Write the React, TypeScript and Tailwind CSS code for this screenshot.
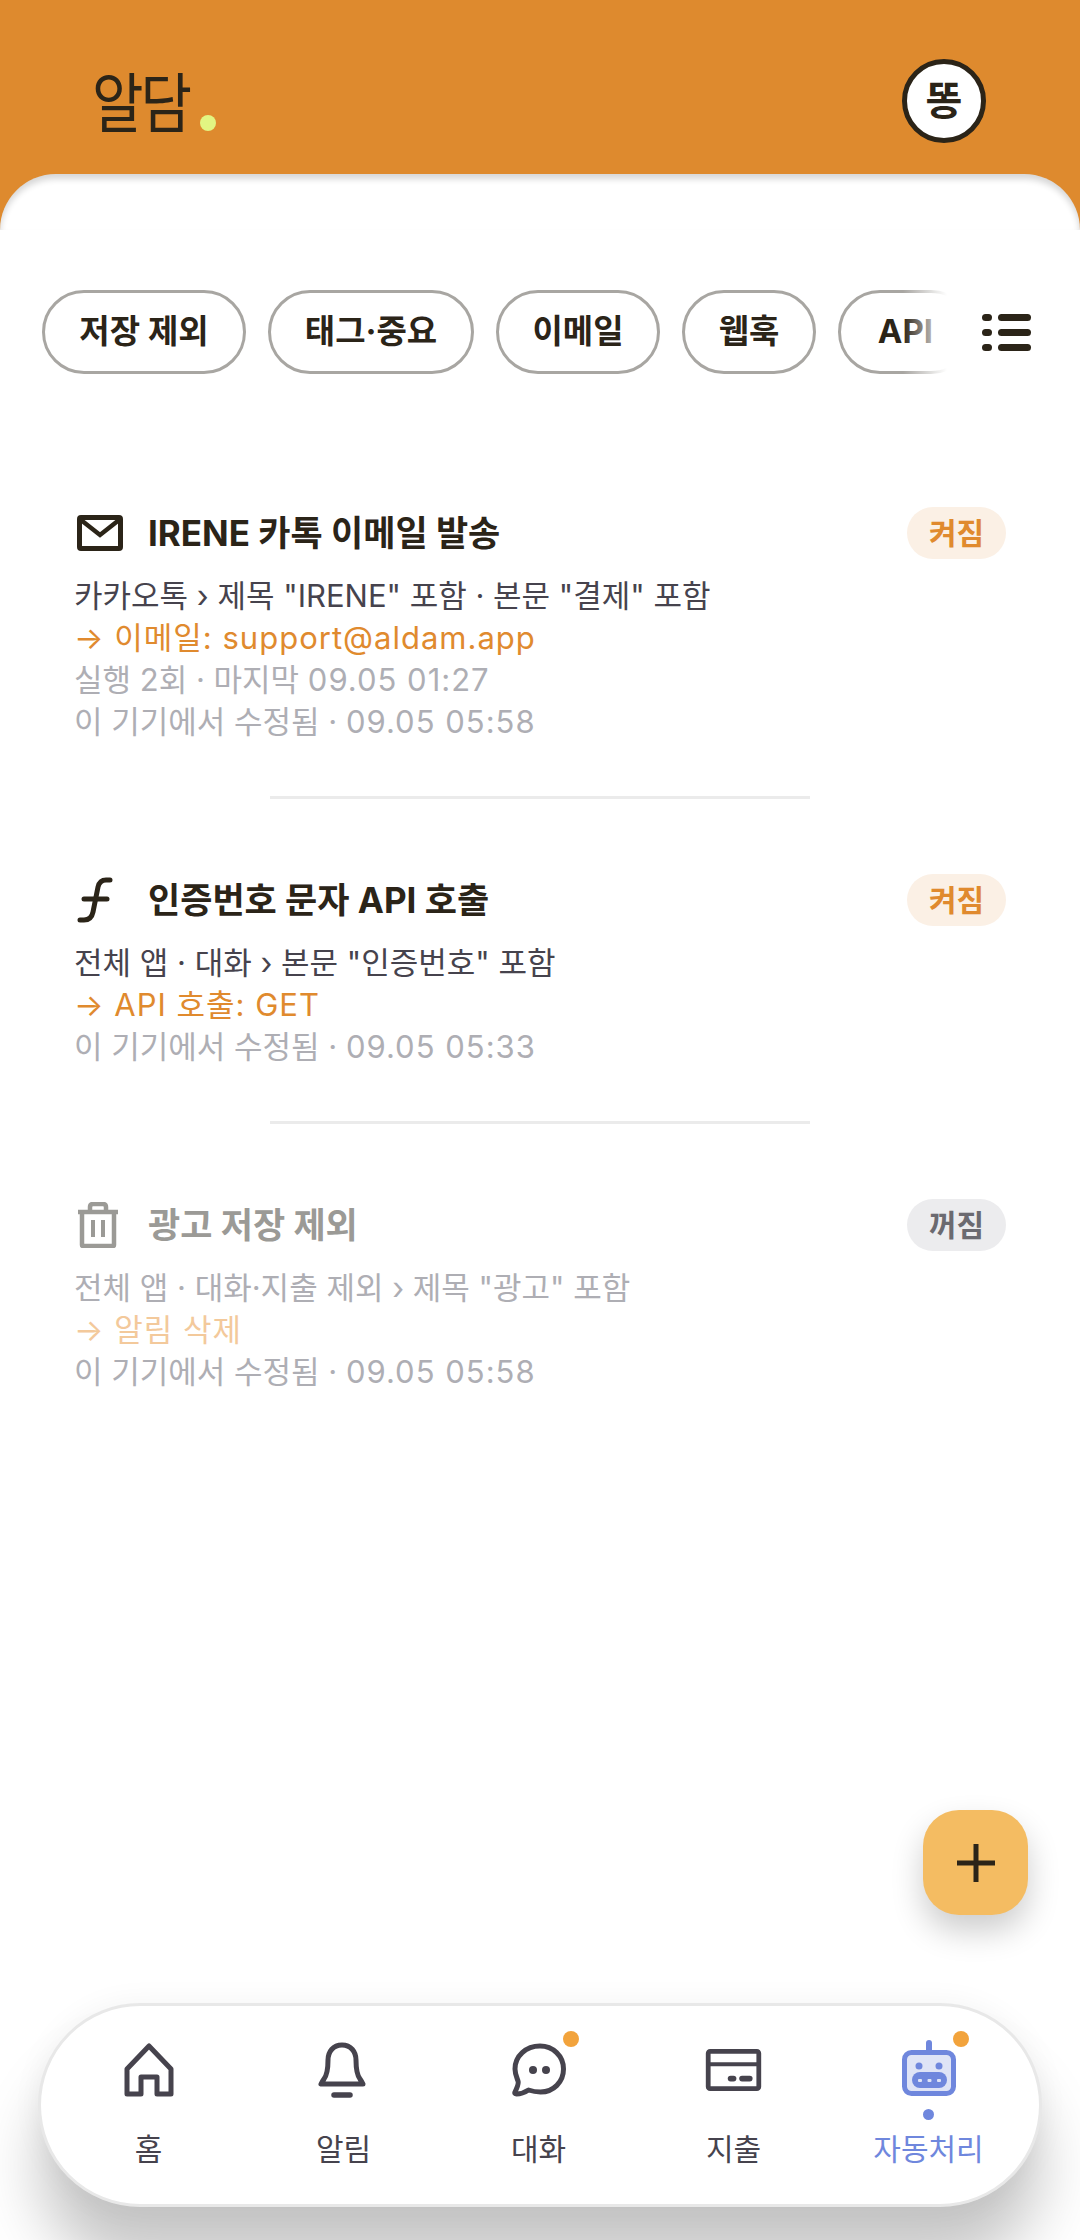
import React from 'react';

const FONT = '[font-family:Inter,"Noto_Sans_CJK_KR",sans-serif]';

function MailIcon() {
  return (
    <svg width="46" height="36" viewBox="0 0 46 36" fill="none">
      <rect x="2.5" y="2.5" width="41" height="31" rx="1.5" stroke="#2b2418" strokeWidth="5" />
      <path d="M4 5l19 15L42 5" stroke="#2b2418" strokeWidth="4.5" />
    </svg>
  );
}

function FnIcon() {
  return (
    <svg width="36" height="46" viewBox="0 0 36 46" fill="none" stroke="#2b2418" strokeWidth="5" strokeLinecap="round">
      <path d="M33 3h-4c-5 0-7 3-8 7l-5 25c-1 5-4 8-9 8H3" />
      <path d="M7 22h23" />
    </svg>
  );
}

function TrashIcon() {
  return (
    <svg width="42" height="46" viewBox="0 0 42 46" fill="none" stroke="#9b9a96" strokeWidth="4.5">
      <path d="M1 10h40" />
      <path d="M13 10V5c0-2 1-3 3-3h10c2 0 3 1 3 3v5" />
      <path d="M5 10v33c0 .8.6 1 1 1h30c.4 0 1-.2 1-1V10" />
      <path d="M16 18v17M26 18v17" strokeWidth="4" />
    </svg>
  );
}

function HomeIcon() {
  return (
    <svg width="50" height="54" viewBox="0 0 50 54" fill="none" stroke="#46434d" strokeWidth="5" strokeLinejoin="round">
      <path d="M25 3L3 26v25h14V34h16v17h14V26z" />
    </svg>
  );
}

function BellIcon() {
  return (
    <svg width="50" height="56" viewBox="0 0 50 56" fill="none" stroke="#46434d" strokeWidth="5" strokeLinecap="round" strokeLinejoin="round" className="-translate-x-[2px]">
      <path d="M25 3c-9 0-14 7-14 15 0 9-1 15-4 19-2 3-3 5-3 5h42s-1-2-3-5c-3-4-4-10-4-19 0-8-5-15-14-15z" />
      <path d="M17 53h16" strokeWidth="5.5" />
    </svg>
  );
}

function ChatIcon() {
  return (
    <svg width="54" height="54" viewBox="0 0 54 54" fill="none">
      <path
        d="M28 3C14 3 3 13 3 26c0 5 2 9 3 12 .7 2-1 7-3 11-.6 1.400 0 2 1.500 2 3 0 9-2 12-4 3 1 7 2 12 2 13 0 23-10 23-23S41 3 28 3z"
        stroke="#46434d"
        strokeWidth="5"
        strokeLinejoin="round"
      />
      <circle cx="21" cy="27" r="4" fill="#46434d" />
      <circle cx="34" cy="27" r="4" fill="#46434d" />
    </svg>
  );
}

function CardIcon() {
  return (
    <svg width="57" height="42" viewBox="0 0 58 44" fill="none">
      <rect x="2.500" y="2.500" width="53" height="39" rx="2" stroke="#46434d" strokeWidth="5" />
      <path d="M3 16h52" stroke="#46434d" strokeWidth="4" />
      <rect x="23" y="28" width="9" height="6" rx="3" fill="#46434d" />
      <rect x="35" y="28" width="14" height="6" rx="3" fill="#46434d" />
    </svg>
  );
}

function RobotIcon() {
  return (
    <svg width="54" height="56" viewBox="0 0 54 56" fill="none" className="-translate-y-[2px]">
      <rect x="24" y="0" width="6" height="14" rx="3" fill="#6f87dd" />
      <rect x="2.500" y="12.500" width="49" height="41" rx="7" fill="#dfe4f6" stroke="#6f87dd" strokeWidth="5" />
      <circle cx="17" cy="26" r="3.500" fill="#6f87dd" />
      <circle cx="37" cy="26" r="3.500" fill="#6f87dd" />
      <rect x="10" y="32" width="35" height="16" rx="8" fill="#6f87dd" />
      <rect x="16" y="39" width="4" height="3" rx="1" fill="#dfe4f6" />
      <rect x="25.500" y="39" width="4" height="3" rx="1" fill="#dfe4f6" />
      <rect x="35" y="39" width="4" height="3" rx="1" fill="#dfe4f6" />
    </svg>
  );
}

const chips = [
  { label: '저장 제외', cls: 'w-[204px]' },
  { label: '태그·중요', cls: 'w-[206px]' },
  { label: '이메일', cls: 'w-[164px]' },
  { label: '웹훅', cls: 'w-[134px]' },
  { label: 'API', cls: 'w-[135px]' },
];

const rules = [
  {
    icon: <MailIcon />,
    title: 'IRENE 카톡 이메일 발송',
    cond: '카카오톡 › 제목 "IRENE" 포함 · 본문 "결제" 포함',
    action: '→ 이메일: support@aldam.app',
    meta: [
      ['실행 2회 · 마지막 ', '09.05 01:27'],
      ['이 기기에서 수정됨 · ', '09.05 05:58'],
    ],
    on: true,
  },
  {
    icon: <FnIcon />,
    title: '인증번호 문자 API 호출',
    cond: '전체 앱 · 대화 › 본문 "인증번호" 포함',
    action: '→ API 호출: GET',
    meta: [['이 기기에서 수정됨 · ', '09.05 05:33']],
    on: true,
  },
  {
    icon: <TrashIcon />,
    title: '광고 저장 제외',
    cond: '전체 앱 · 대화·지출 제외 › 제목 "광고" 포함',
    action: '→ 알림 삭제',
    meta: [['이 기기에서 수정됨 · ', '09.05 05:58']],
    on: false,
  },
];

const tabs = [
  { icon: <HomeIcon />, label: '홈' },
  { icon: <BellIcon />, label: '알림' },
  { icon: <ChatIcon />, label: '대화', badge: true },
  { icon: <CardIcon />, label: '지출' },
  { icon: <RobotIcon />, label: '자동처리', badge: true, active: true },
];

function RuleRow({ rule }: { rule: (typeof rules)[number] }) {
  return (
    <div className="pl-[74px] pr-[74px]">
      <div className="flex h-[50px] items-center justify-between">
        <div className="flex items-center">
          <div className="flex w-[74px] shrink-0 justify-start pl-[3px]">{rule.icon}</div>
          <span className={`text-[35px] font-bold ${rule.on ? 'text-[#2b2418]' : 'text-[#9b9a96]'}`}>{rule.title}</span>
        </div>
        <span
          className={`flex h-[52px] w-[99px] items-center justify-center rounded-full text-[30px] font-bold ${
            rule.on ? 'bg-[#fbf0e5] text-[#e08a2e]' : 'bg-[#ececee] text-[#6b6a70]'
          }`}
        >
          {rule.on ? '켜짐' : '꺼짐'}
        </span>
      </div>
      <div className="mt-[17px] text-[31px] leading-[42px]">
        <p className={rule.on ? 'text-[#46434d]' : 'text-[#aeaeb4]'}>{rule.cond}</p>
        <p className={`tracking-[1px] ${rule.on ? 'text-[#e08a2e]' : 'text-[#f3c99b]'}`}>{rule.action}</p>
        {rule.meta.map(([label, time]) => (
          <p key={label + time} className="text-[#aeaeb4]">
            {label}
            <span className="tracking-[1px]">{time}</span>
          </p>
        ))}
      </div>
    </div>
  );
}

export default function App() {
  return (
    <div className={`relative h-[2240px] w-[1080px] overflow-hidden bg-[#de8a2e] ${FONT}`}>
      <header className="flex h-[174px] items-center justify-between pl-[92px] pr-[94px] pt-[28px]">
        <div className="flex items-end">
          <span className="origin-bottom translate-y-[8px] scale-y-[1.15] text-[56px] leading-[62px] tracking-[-3px] text-[#2b2418]">
            알담
          </span>
          <span className="mb-[1px] ml-[11px] h-[16px] w-[16px] rounded-full bg-[#e2f582]" />
        </div>
        <div className="flex h-[84px] w-[84px] items-center justify-center rounded-full border-[5px] border-[#2b2418] bg-white text-[40px] font-bold text-[#2b2418]">
          똥
        </div>
      </header>

      <main className="relative h-[2066px] rounded-t-[56px] bg-white pt-[116px]">
        <div className="absolute inset-x-0 top-0 h-[56px] rounded-t-[56px] shadow-[inset_0_5px_6px_rgba(0,0,0,0.16)]" />
        <div className="flex h-[84px] items-center pl-[42px] pr-[48px]">
          <div className="relative w-[905px] shrink-0 overflow-hidden">
            <div className="flex gap-[22px]">
              {chips.map((chip) => (
                <div
                  key={chip.label}
                  className={`flex h-[84px] shrink-0 items-center justify-center rounded-[42px] border-[3px] border-[#a8a6a2] text-[33px] font-bold text-[#2b2418] ${chip.cls}`}
                >
                  {chip.label}
                </div>
              ))}
            </div>
            <div className="absolute inset-y-0 right-0 w-[44px] bg-gradient-to-r from-transparent to-white" />
          </div>
          <div className="ml-[35px] flex w-[49px] shrink-0 flex-col gap-[8px]">
            {[0, 1, 2].map((i) => (
              <div key={i} className="flex items-center gap-[6px]">
                <span className="h-[7px] w-[10px] rounded-full bg-[#2b2418]" />
                <span className="h-[7px] flex-1 rounded-full bg-[#2b2418]" />
              </div>
            ))}
          </div>
        </div>

        <div className="mt-[134px]">
          {rules.map((rule, i) => (
            <div key={rule.title}>
              <RuleRow rule={rule} />
              {i < rules.length - 1 && <div className="mx-auto mb-[76px] mt-[53px] h-[3px] w-[540px] bg-[#ebebeb]" />}
            </div>
          ))}
        </div>
      </main>

      <button className="absolute left-[923px] top-[1810px] flex h-[105px] w-[105px] items-center justify-center rounded-[36px] bg-[#f4bc62] shadow-[0_16px_32px_rgba(0,0,0,0.2)]">
        <svg width="38" height="38" viewBox="0 0 38 38" stroke="#2b2418" strokeWidth="5">
          <path d="M19 0v38M0 19h38" />
        </svg>
      </button>

      <nav className="absolute left-[38px] top-[2003px] flex h-[204px] w-[1004px] rounded-[102px] border-[3px] border-[#e8e8e8] bg-white pl-[10px] pr-[13px] shadow-[0_60px_60px_rgba(0,0,0,0.22),0_0_30px_rgba(0,0,0,0.05)]">
        {tabs.map((tab) => (
          <div key={tab.label} className="relative flex h-full flex-1 flex-col items-center">
            <div className="mt-[34px] flex h-[60px] items-center justify-center">{tab.icon}</div>
            {tab.badge && (
              <span className="absolute left-[122px] top-[25px] h-[16px] w-[16px] rounded-full bg-[#f2a33c]" />
            )}
            {tab.active && <span className="absolute top-[103px] h-[11px] w-[11px] rounded-full bg-[#6f87dd]" />}
            <span className={`mt-[31px] text-[30px] leading-[36px] ${tab.active ? 'text-[#6f87dd]' : 'text-[#46434d]'}`}>
              {tab.label}
            </span>
          </div>
        ))}
      </nav>
    </div>
  );
}
